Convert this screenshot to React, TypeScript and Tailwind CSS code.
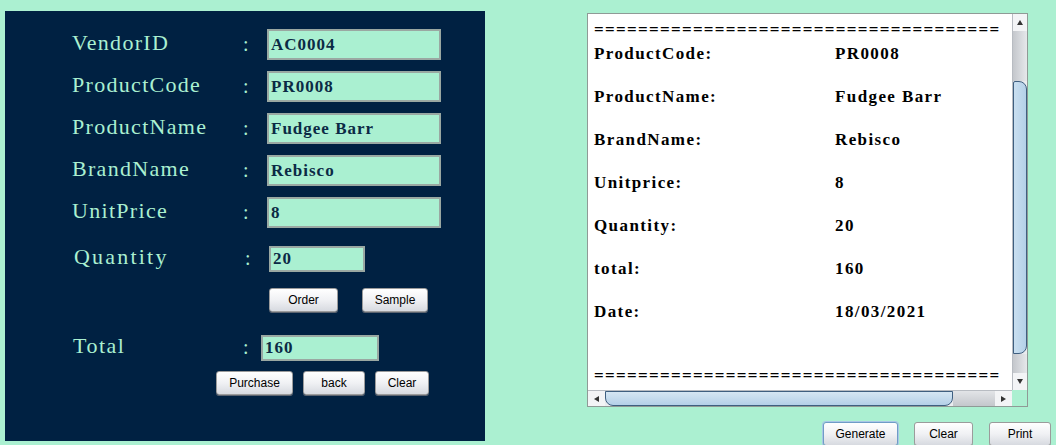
import React from "react";

const serif = { fontFamily: '"Liberation Serif", "Times New Roman", serif' };
const sans = { fontFamily: '"Liberation Sans", Arial, sans-serif' };

const Btn = ({ label, w, focus }: { label: string; w: string; focus?: boolean }) => (
  <button
    style={sans}
    className={`${w} h-[24px] rounded-[3px] border ${
      focus ? "border-[#6f9cc6] ring-1 ring-[#a9c8e6]" : "border-[#9b9b9b]"
    } bg-gradient-to-b from-white via-[#f0f1f4] to-[#d7dae0] text-[12px] text-black shadow-[0_1px_0_#5c6470]`}
  >
    {label}
  </button>
);

const Field = ({ value, w, h }: { value: string; w: string; h: string }) => (
  <div
    style={serif}
    className={`${w} ${h} flex items-center border-2 border-[#9aa8a2] bg-[#aaf0d1] px-[2px] text-[17px] font-bold tracking-[1px] text-[#0b2a45]`}
  >
    {value}
  </div>
);

const rows = [
  ["VendorID", "AC0004"],
  ["ProductCode", "PR0008"],
  ["ProductName", "Fudgee Barr"],
  ["BrandName", "Rebisco"],
  ["UnitPrice", "8"],
];

const receipt = [
  ["ProductCode:", "PR0008"],
  ["ProductName:", "Fudgee Barr"],
  ["BrandName:", "Rebisco"],
  ["Unitprice:", "8"],
  ["Quantity:", "20"],
  ["total:", "160"],
  ["Date:", "18/03/2021"],
];

const Arrow = ({ dir }: { dir: "up" | "down" | "left" | "right" }) => {
  const pts = {
    up: "4,1 7,6 1,6",
    down: "1,1 7,1 4,6",
    left: "6,1 6,7 1,4",
    right: "1,1 1,7 6,4",
  }[dir];
  return (
    <svg width="8" height="8" viewBox="0 0 8 8">
      <polygon points={pts} fill="#333" />
    </svg>
  );
};

export default function App() {
  const eq = "=".repeat(37);
  return (
    <div className="flex h-[445px] w-[1056px] overflow-hidden bg-[#abf0d1]">
      {/* left form panel */}
      <div className="ml-[5px] mt-[11px] h-[430px] w-[480px] bg-[#002142] pt-[18px]">
        <div className="flex flex-col gap-[11px]">
          {rows.map(([l, v]) => (
            <div key={l} className="flex h-[31px] items-center">
              <span style={serif} className="ml-[67px] w-[171px] pb-[4px] text-[22px] tracking-[1.3px] text-[#aaf0d1]">
                {l}
              </span>
              <span style={serif} className="w-[24px] pb-[2px] text-[20px] text-[#aaf0d1]">:</span>
              <Field value={v} w="w-[174px]" h="h-[31px]" />
            </div>
          ))}
        </div>

        <div className="mt-[18px] flex h-[26px] items-center">
          <span style={serif} className="ml-[69px] w-[171px] pb-[5px] text-[22px] tracking-[2.2px] text-[#aaf0d1]">
            Quantity
          </span>
          <span style={serif} className="w-[24px] pb-[2px] text-[20px] text-[#aaf0d1]">:</span>
          <Field value="20" w="w-[96px]" h="h-[26px]" />
        </div>

        <div className="ml-[264px] mt-[16px] flex gap-[24px]">
          <Btn label="Order" w="w-[69px]" />
          <Btn label="Sample" w="w-[66px]" />
        </div>

        <div className="mt-[23px] flex h-[26px] items-center">
          <span style={serif} className="ml-[68px] w-[170px] pb-[5px] text-[22px] tracking-[1.5px] text-[#aaf0d1]">
            Total
          </span>
          <span style={serif} className="w-[18px] pb-[2px] text-[20px] text-[#aaf0d1]">:</span>
          <Field value="160" w="w-[118px]" h="h-[26px]" />
        </div>

        <div className="ml-[211px] mt-[10px] flex gap-[10px]">
          <Btn label="Purchase" w="w-[77px]" />
          <Btn label="back" w="w-[62px]" />
          <Btn label="Clear" w="w-[54px]" />
        </div>
      </div>

      {/* right receipt panel */}
      <div className="ml-[102px] mt-[13px] flex flex-col">
        <div className="flex h-[394px] w-[441px] flex-col border border-[#8f9a96]">
          <div className="flex h-[377px]">
            <div style={serif} className="w-[424px] overflow-hidden bg-white pl-[6px] text-[17px] font-bold text-black">
              <div className="mt-[8px] h-[16px] whitespace-nowrap leading-[16px] tracking-[1.3px]">{eq}</div>
              <div className="-mt-[6px] flex flex-col">
                {receipt.map(([k, v]) => (
                  <div key={k} className="flex h-[43px] items-center tracking-[1.4px]">
                    <span className="w-[241px]">{k}</span>
                    <span>{v}</span>
                  </div>
                ))}
              </div>
              <div className="mt-[35px] h-[16px] whitespace-nowrap leading-[16px] tracking-[1.3px]">{eq}</div>
            </div>
            {/* vertical scrollbar */}
            <div className="flex w-[15px] flex-col border-l border-[#b8bcc2] bg-gradient-to-r from-[#d9dbdf] to-[#eceef1]">
              <div className="flex h-[17px] items-center justify-center bg-[#f3f4f6]">
                <Arrow dir="up" />
              </div>
              <div className="h-[50px] bg-gradient-to-r from-[#c4c7cc] to-[#e6e8eb]" />
              <div className="h-[273px] rounded-r-[8px] rounded-tl-[2px] border border-[#3f5f80] bg-gradient-to-r from-[#c9dff0] to-[#b4d0e8]" />
              <div className="flex-1 bg-gradient-to-r from-[#c4c7cc] to-[#e6e8eb]" />
              <div className="flex h-[17px] items-center justify-center bg-[#f3f4f6]">
                <Arrow dir="down" />
              </div>
            </div>
          </div>
          {/* horizontal scrollbar */}
          <div className="flex h-[16px]">
            <div className="flex w-[424px] border-t border-[#b8bcc2] bg-gradient-to-b from-[#d9dbdf] to-[#eceef1]">
              <div className="flex w-[17px] items-center justify-center bg-[#f3f4f6]">
                <Arrow dir="left" />
              </div>
              <div className="w-[348px] rounded-b-[8px] border border-[#3f5f80] bg-gradient-to-b from-[#d5e6f3] to-[#b4d0e8]" />
              <div className="flex-1 bg-gradient-to-b from-[#e2e4e7] to-[#c4c7cc]" />
              <div className="flex w-[17px] items-center justify-center bg-[#f3f4f6]">
                <Arrow dir="right" />
              </div>
            </div>
            <div className="flex-1 bg-[#abf0d1]" />
          </div>
        </div>

        <div className="ml-[236px] mt-[15px] flex gap-[16px]">
          <Btn label="Generate" w="w-[75px]" focus />
          <Btn label="Clear" w="w-[59px]" />
          <Btn label="Print" w="w-[62px]" />
        </div>
      </div>
    </div>
  );
}
